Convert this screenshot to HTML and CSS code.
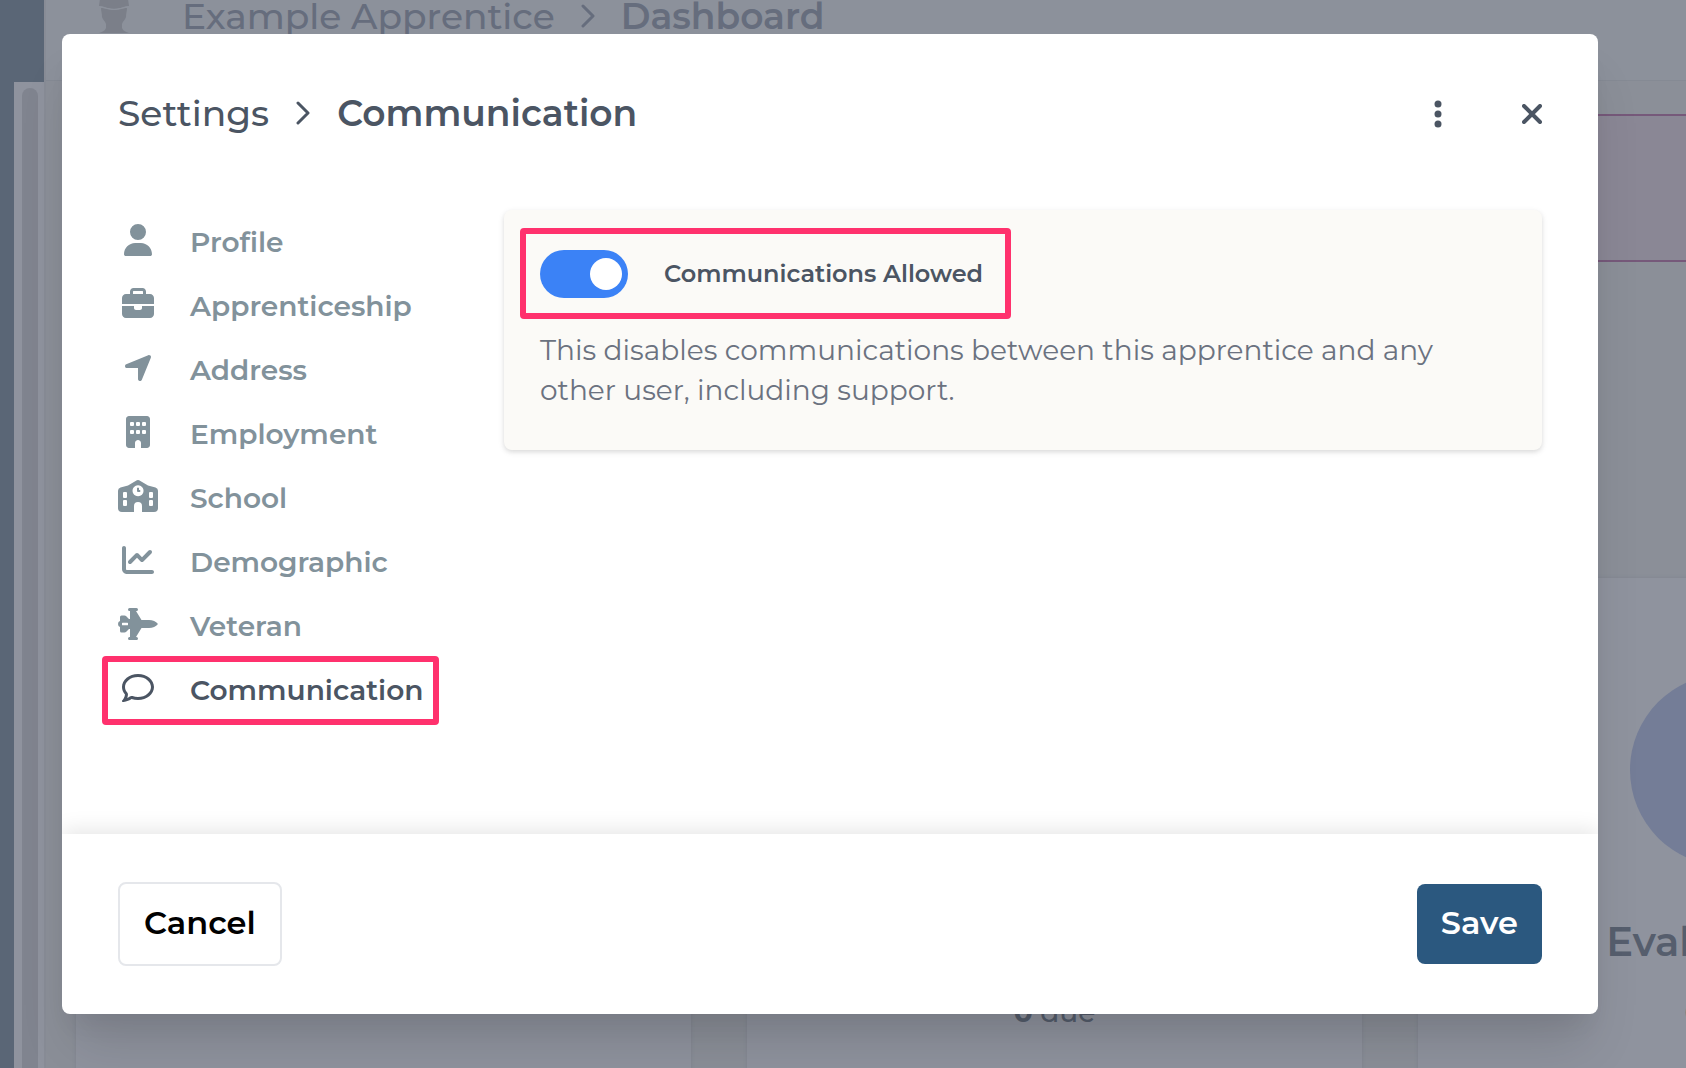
FILE: index.html
```html
<!DOCTYPE html>
<html lang="en">
<head>
<meta charset="utf-8">
<title>Settings – Communication</title>
<link rel="stylesheet" href="styles.css">
</head>
<body>
<div class="app" aria-hidden="true">
  <div class="rail"><div class="track"><div class="thumb"></div></div></div>
  <div class="page">
    <header class="topbar">
      <svg class="avatar" width="32" height="34" viewBox="0 0 32 34"><path d="M2 0h28l1 7c-5 0-7 2-10 2-3 1-7 1-10 0-3 0-5-2-10-2z"/><path d="M3 9c4 0 6 2 13 2s9-2 13-2c0 3-1 5-1 9-1 3-3 4-4 7v4c1 3 4 4 7 5H1c3-1 6-2 7-5v-4c-1-3-3-4-4-7 0-4-1-6-1-9z"/></svg>
      <span class="crumb">Example Apprentice</span>
      <svg class="chevron" width="14" height="24" viewBox="0 0 14 24"><path d="M2 2l10 10L2 22"/></svg>
      <strong class="crumb">Dashboard</strong>
    </header>
    <div class="banner"></div>
    <div class="cards">
      <section class="card"></section>
      <section class="card"><div class="disc"></div><h2>Reviews</h2><p><b>0</b> due</p></section>
      <section class="card"><div class="disc"></div><h2>Evaluations</h2><p><b>0</b> due</p></section>
    </div>
  </div>
</div>

<div class="overlay">
  <div class="modal" role="dialog" aria-labelledby="title">
    <header class="modal-head">
      <h1 class="title" id="title">Settings
        <svg class="chevron" width="14" height="24" viewBox="0 0 14 24"><path d="M2 2l10 10L2 22"/></svg>
        <strong>Communication</strong></h1>
      <button class="icon-button" type="button" aria-label="More"><svg width="8" height="28" viewBox="0 0 16 56"><circle cx="8" cy="8" r="7"/><circle cx="8" cy="28" r="7"/><circle cx="8" cy="48" r="7"/></svg></button>
      <button class="icon-button" type="button" aria-label="Close"><svg class="cross" width="20" height="20" viewBox="0 0 20 20"><path d="M2 2l16 16M18 2L2 18"/></svg></button>
    </header>
    <div class="modal-body">
      <nav class="menu">
        <a href="#profile"><svg viewBox="-96 0 640 512"><path d="M224 256A128 128 0 1 0 224 0a128 128 0 1 0 0 256zm-45.700 48C79.800 304 0 383.800 0 482.300C0 498.700 13.300 512 29.700 512H418.300c16.400 0 29.700-13.300 29.700-29.700C448 383.800 368.200 304 269.700 304H178.300z"/></svg><span>Profile</span></a>
        <a href="#apprenticeship"><svg viewBox="-64 0 640 512"><path d="M184 48H328c4.400 0 8 3.600 8 8V96H176V56c0-4.400 3.600-8 8-8zm-56 8V96H64C28.700 96 0 124.700 0 160v96H192 320 512V160c0-35.300-28.700-64-64-64H384V56c0-30.900-25.100-56-56-56H184c-30.900 0-56 25.100-56 56zM512 288H320v32c0 17.700-14.300 32-32 32H224c-17.700 0-32-14.300-32-32V288H0V416c0 35.300 28.700 64 64 64H448c35.300 0 64-28.700 64-64V288z"/></svg><span>Apprenticeship</span></a>
        <a href="#address"><svg viewBox="-96 0 640 512"><path d="M429.600 92.100c4.900-11.900 2.100-25.600-7-34.700s-22.800-11.900-34.700-7l-352 144c-14.200 5.800-22.200 20.800-19.300 35.800s16.100 25.800 31.400 25.800H224V432c0 15.300 10.800 28.400 25.800 31.400s30-5.100 35.800-19.300l144-352z"/></svg><span>Address</span></a>
        <a href="#employment"><svg viewBox="-128 0 640 512"><path fill-rule="evenodd" d="M48 0C21.500 0 0 21.500 0 48V464c0 26.500 21.500 48 48 48h96V432c0-26.500 21.500-48 48-48s48 21.500 48 48v80h96c26.500 0 48-21.500 48-48V48c0-26.500-21.500-48-48-48zM80 96h32q16 0 16 16v32q0 16-16 16H80q-16 0-16-16v-32q0-16 16-16zM176 96h32q16 0 16 16v32q0 16-16 16h-32q-16 0-16-16v-32q0-16 16-16zM272 96h32q16 0 16 16v32q0 16-16 16h-32q-16 0-16-16v-32q0-16 16-16zM80 224h32q16 0 16 16v32q0 16-16 16H80q-16 0-16-16v-32q0-16 16-16zM176 224h32q16 0 16 16v32q0 16-16 16h-32q-16 0-16-16v-32q0-16 16-16zM272 224h32q16 0 16 16v32q0 16-16 16h-32q-16 0-16-16v-32q0-16 16-16z"/></svg><span>Employment</span></a>
        <a href="#school"><svg viewBox="0 0 640 512"><path fill-rule="evenodd" d="M302 5q18-9 36 0L480 88l120 32q40 12 40 50v278q0 64-64 64H384V416a64 64 0 0 0-128 0v96H64q-64 0-64-64V170q0-38 40-50L160 88zM320 84a88 88 0 1 0 1 0zM96 192h32q16 0 16 16v64q0 16-16 16H96q-16 0-16-16v-64q0-16 16-16zM96 320h32q16 0 16 16v64q0 16-16 16H96q-16 0-16-16v-64q0-16 16-16zM512 192h32q16 0 16 16v64q0 16-16 16h-32q-16 0-16-16v-64q0-16 16-16zM512 320h32q16 0 16 16v64q0 16-16 16h-32q-16 0-16-16v-64q0-16 16-16z"/><path d="M304 128q16-16 32 0v32h16q16 16 0 32h-32q-16 0-16-16z"/></svg><span>School</span></a>
        <a href="#demographic"><svg viewBox="-64 0 640 512"><path d="M64 64c0-17.700-14.300-32-32-32S0 46.300 0 64V400c0 44.200 35.800 80 80 80H480c17.700 0 32-14.300 32-32s-14.300-32-32-32H80c-8.800 0-16-7.200-16-16V64zm406.600 86.600c12.500-12.500 12.500-32.800 0-45.300s-32.800-12.500-45.300 0L320 210.700l-57.400-57.400c-12.500-12.500-32.800-12.500-45.300 0l-112 112c-12.500 12.500-12.500 32.800 0 45.300s32.800 12.500 45.300 0L240 221.300l57.400 57.400c12.500 12.500 32.800 12.500 45.300 0l128-128z"/></svg><span>Demographic</span></a>
        <a href="#veteran"><svg viewBox="0 0 640 512"><path fill-rule="evenodd" d="M160 24q0-24 24-24h112q24 0 24 24t-24 24h-8l88 144h120c60 0 110 20 144 64-34 44-84 64-144 64H376l-88 144h8q24 0 24 24t-24 24H184q-24 0-24-24t24-24h8V336h-16l-44 44q-12 12-28 12H56q-24 0-24-24v-64q-32-8-32-48t32-48v-64q0-24 24-24h48q16 0 28 12l44 44h16V48h-8q-24 0-24-24zM72 236q-8 0-8 8v24q0 8 8 8h80q8 0 8-8v-24q0-8-8-8z"/></svg><span>Veteran</span></a>
        <a href="#communication" class="current marked" aria-current="page"><svg viewBox="-64 0 640 512"><path d="M123.600 391.300c12.900-9.400 29.600-11.800 44.600-6.400c26.500 9.600 56.200 15.100 87.800 15.100c124.700 0 208-80.500 208-160s-83.300-160-208-160S48 160.500 48 240c0 32 12.400 62.800 35.700 89.200c8.600 9.700 12.800 22.500 11.800 35.500c-1.400 18.100-5.700 34.700-11.300 49.400c17-7.900 31.100-16.700 39.400-22.700zM21.200 431.900c1.800-2.700 3.500-5.400 5.100-8.100c10-16.600 19.500-38.400 21.400-62.900C17.700 326.800 0 285.100 0 240C0 125.100 114.600 32 256 32s256 93.100 256 208s-114.600 208-256 208c-37.100 0-72.300-6.400-104.100-17.900c-11.900 8.700-31.300 20.600-54.300 30.600c-15.100 6.600-32.300 12.600-50.100 16.100c-5.300 1-10.700 2-16.300 2.500c-5.100 .5-10.200 .8-15.300 .8c-6.500 0-12.300-3.900-14.800-9.900c-2.500-6-1.100-12.800 3.400-17.400c4.100-4.200 7.800-8.700 11.300-13.500z"/></svg><span>Communication</span></a>
      </nav>
      <section class="panel">
        <label class="switch marked"><input type="checkbox" checked><span>Communications Allowed</span></label>
        <p>This disables communications between this apprentice and any other user, including support.</p>
      </section>
    </div>
    <footer class="modal-foot">
      <button class="button" type="button">Cancel</button>
      <button class="button primary" type="button">Save</button>
    </footer>
  </div>
</div>
</body>
</html>
```
FILE: styles.css
```css
* { box-sizing: border-box; }
body { margin: 0; height: 100vh; overflow: hidden; font-family: Montserrat, Inter, sans-serif; color: #4b5563; }
h1, h2, p { margin: 0; }
svg { display: block; flex: none; fill: currentColor; }
.chevron, .cross { fill: none; stroke: currentColor; stroke-width: 3; stroke-linecap: round; stroke-linejoin: round; }
.cross { stroke-width: 4; }

/* dimmed dashboard */
.app { display: flex; height: 100vh; overflow: hidden; background: #8b8f98; }
.rail { flex: none; width: 44px; padding: 82px 0 0 14px; background: #5a6676; }
.track { height: 100%; padding: 6px 6px 0 8px; background: #8f939e; }
.thumb { height: 100%; border-radius: 8px 8px 0 0; background: #80848f; }
.page { flex: 1; min-width: 0; overflow: hidden; border-left: 2px solid #888c96; }
.topbar { display: flex; align-items: center; height: 81px; padding: 0 52px 48px; gap: 26px; border-bottom: 1px solid #858a94; color: #666d7d; background: #8c919b; }
.avatar { margin-right: 26px; color: #7b7f89; }
.crumb { font-size: 36px; font-weight: 500; line-height: 40px; white-space: nowrap; }
strong, strong.crumb { font-weight: 600; }
.banner { height: 148px; margin: 33px 0 0 30px; border: 2px solid #76597a; border-right: 0; background: #8a8795; }
.cards { display: flex; gap: 56px; margin: 316px 0 0 30px; }
.card { flex: none; width: 615px; height: 600px; padding-top: 96px; background: #8f939e; box-shadow: 0 0 3px #7f848e; text-align: center; color: #565e6d; }
.disc { width: 192px; height: 192px; margin: 0 auto 48px; border-radius: 50%; background: #747d97; }
.card h2 { font-size: 40px; font-weight: 600; line-height: 56px; }
.card p { margin-top: 24px; font-size: 28px; font-weight: 500; line-height: 36px; }

/* dialog */
.overlay { position: absolute; inset: 0; display: flex; padding: 34px 88px 54px 62px; }
.modal { flex: 1; min-width: 0; display: flex; flex-direction: column; border-radius: 8px; overflow: hidden; background: #fff; box-shadow: 0 40px 50px -10px rgba(0,0,0,.12), 0 20px 24px -10px rgba(0,0,0,.06); }
.modal-head { display: flex; align-items: center; height: 160px; padding: 0 56px; }
.title { display: flex; align-items: center; gap: 27px; flex: 1; padding-bottom: 2px; font-size: 36px; font-weight: 500; line-height: 48px; }
.icon-button { display: flex; justify-content: center; width: 20px; margin-left: 74px; padding: 0; border: 0; background: none; color: #4b5563; }
.modal-body { flex: 1; display: flex; align-items: flex-start; padding: 16px 56px; }
.menu { flex: none; width: 386px; }
.menu a { display: flex; align-items: center; gap: 32px; width: 305px; height: 64px; color: #82929b; font-size: 28px; font-weight: 600; text-decoration: none; }
.menu svg { width: 40px; height: 32px; margin-bottom: 4px; }
.menu .current { color: #4b5563; }
.marked { position: relative; }
.marked::after { content: ""; position: absolute; inset: -2px -16px -3px; border: 6px solid #ff316d; border-radius: 4px; }
.panel { flex: 1; min-width: 0; padding: 40px 36px; border-radius: 8px; background: #fbfaf7; box-shadow: 0 2px 6px rgba(0,0,0,.1), 0 2px 4px rgba(0,0,0,.06); }
.switch { display: inline-flex; align-items: center; gap: 36px; height: 48px; font-size: 24px; font-weight: 600; }
.switch::after { inset: -22px -28px -21px -20px; }
.switch span { padding-bottom: 2px; }
.switch input { appearance: none; display: flex; width: 88px; height: 48px; margin: 0; padding: 8px 6px; border-radius: 24px; background: #3b82f6; }
.switch input::before { content: ""; width: 32px; height: 32px; border-radius: 50%; background: #fff; }
.switch input:checked { justify-content: flex-end; }
.panel p { margin-top: 32px; font-size: 28px; line-height: 40px; color: #6b7280; }
.modal-foot { display: flex; align-items: center; justify-content: space-between; height: 180px; padding: 0 56px; box-shadow: 0 -4px 20px rgba(0,0,0,.1); }
.button { padding: 19px 24px 21px; border: 2px solid #e5e7eb; border-radius: 8px; background: #fff; color: #000; font-family: inherit; font-size: 32px; font-weight: 600; line-height: 40px; }
.primary { border: 0; background: #2b587f; color: #fff; }
```
